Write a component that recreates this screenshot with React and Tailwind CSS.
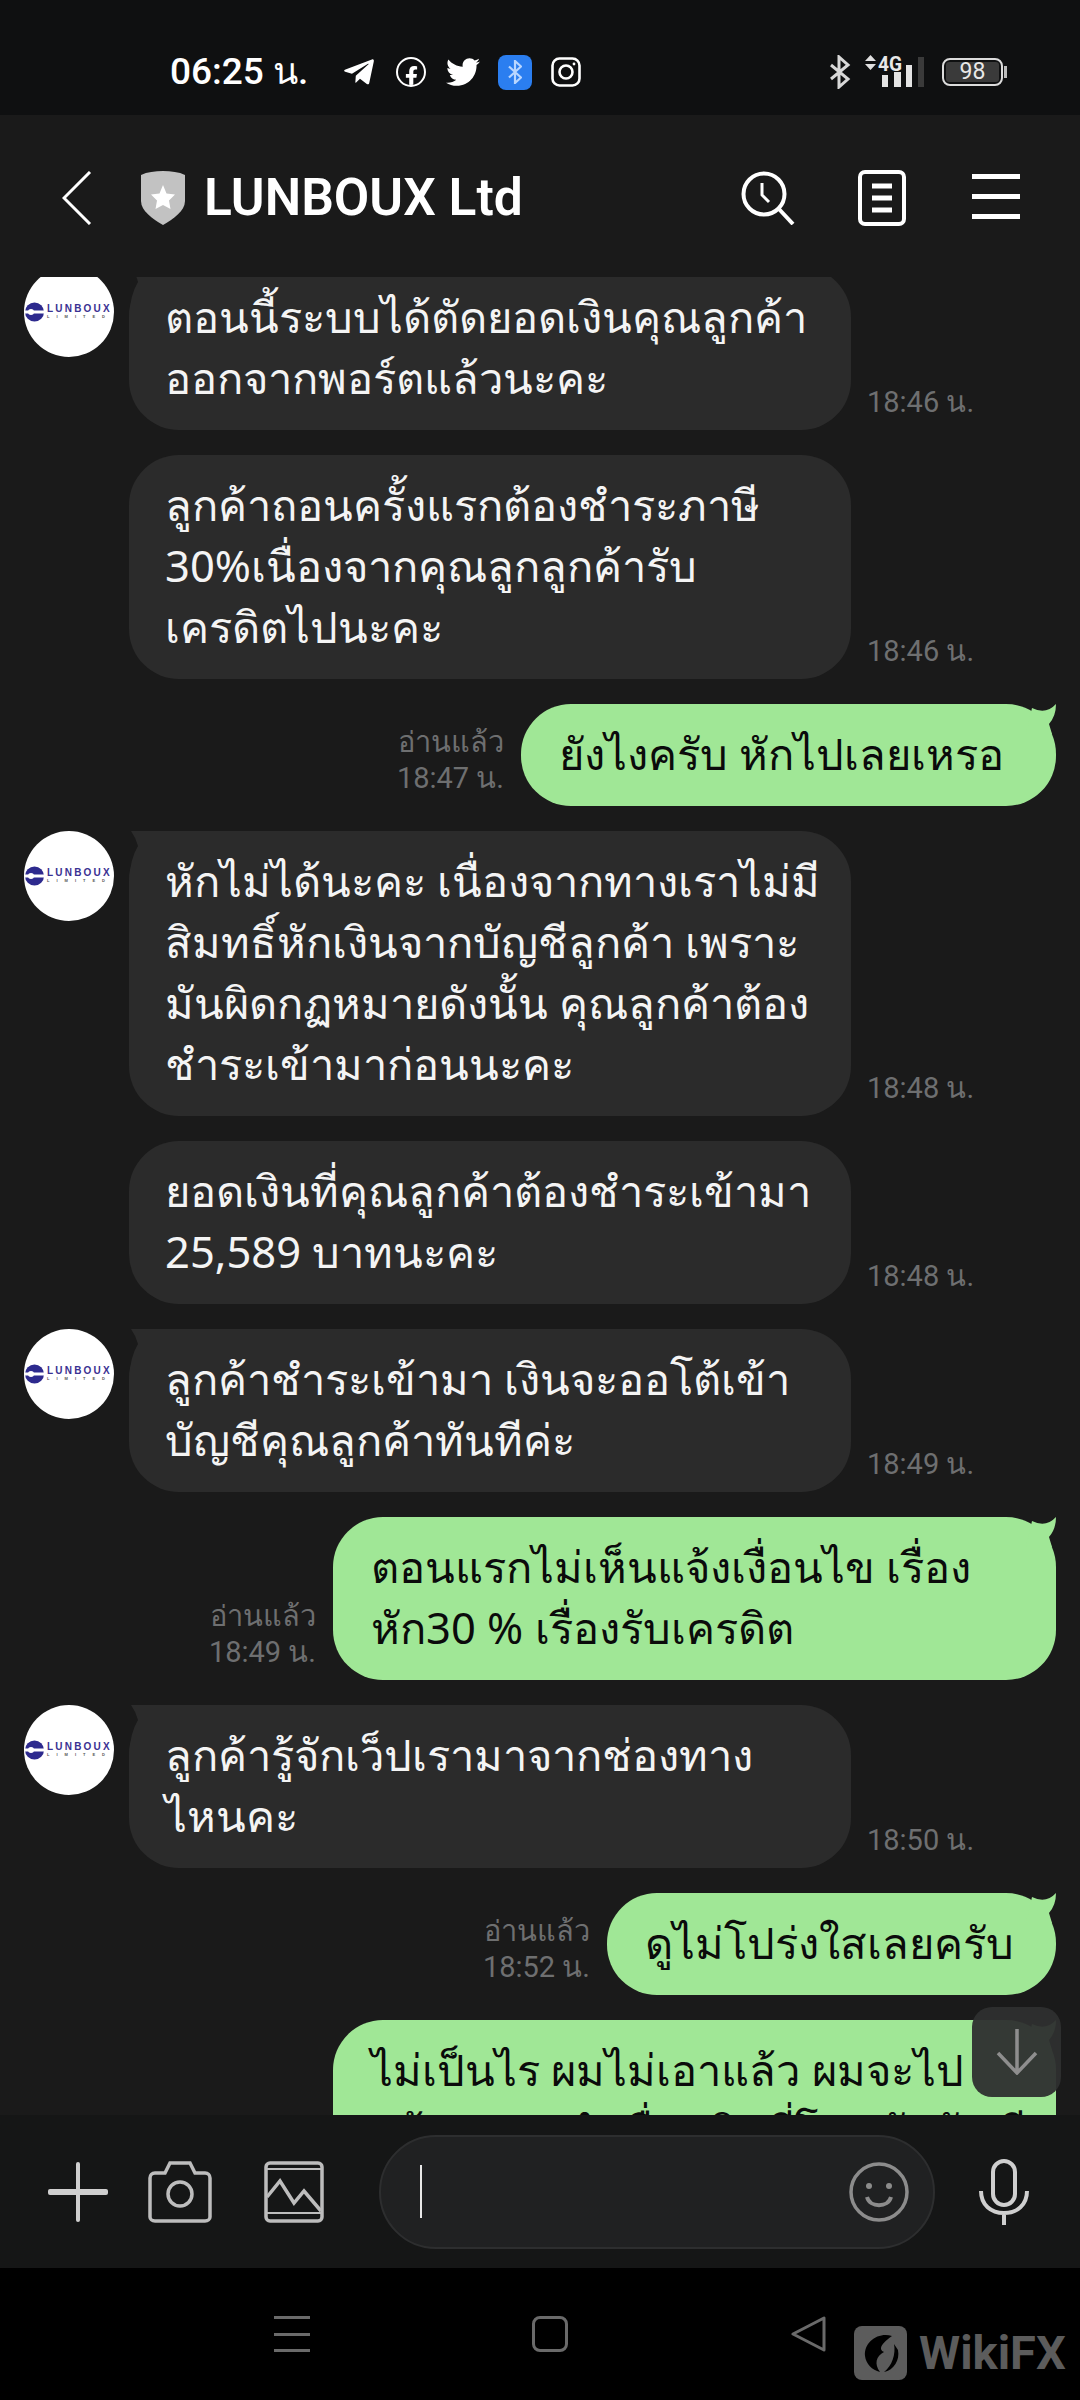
import { FaTelegramPlane, FaTwitter, FaFacebookF } from "react-icons/fa";

const messages = [
  { from: "them", avatar: true, time: "18:46 น.", lines: ["ตอนนี้ระบบได้ตัดยอดเงินคุณลูกค้า", "ออกจากพอร์ตแล้วนะคะ"] },
  { from: "them", time: "18:46 น.", lines: ["ลูกค้าถอนครั้งแรกต้องชำระภาษี", "30%เนื่องจากคุณลูกลูกค้ารับ", "เครดิตไปนะคะ"] },
  { from: "me", width: "w-[535px]", time: "18:47 น.", lines: ["ยังไงครับ หักไปเลยเหรอ"] },
  { from: "them", avatar: true, time: "18:48 น.", lines: ["หักไม่ได้นะคะ เนื่องจากทางเราไม่มี", "สิมทธิ์หักเงินจากบัญชีลูกค้า เพราะ", "มันผิดกฏหมายดังนั้น คุณลูกค้าต้อง", "ชำระเข้ามาก่อนนะคะ"] },
  { from: "them", time: "18:48 น.", lines: ["ยอดเงินที่คุณลูกค้าต้องชำระเข้ามา", "25,589 บาทนะคะ"] },
  { from: "them", avatar: true, time: "18:49 น.", lines: ["ลูกค้าชำระเข้ามา เงินจะออโต้เข้า", "บัญชีคุณลูกค้าทันทีค่ะ"] },
  { from: "me", width: "w-[723px]", time: "18:49 น.", lines: ["ตอนแรกไม่เห็นแจ้งเงื่อนไข เรื่อง", "หัก30 % เรื่องรับเครดิต"] },
  { from: "them", avatar: true, time: "18:50 น.", lines: ["ลูกค้ารู้จักเว็ปเรามาจากช่องทาง", "ไหนคะ"] },
  { from: "me", width: "w-[449px]", time: "18:52 น.", lines: ["ดูไม่โปร่งใสเลยครับ"] },
  { from: "me", width: "w-[723px]", lines: ["ไม่เป็นไร ผมไม่เอาแล้ว ผมจะไป", "แจ้งความ ทำเรื่องเงินที่โดนหักบัญชี"] },
];

function Avatar() {
  return (
    <div className="w-[90px] h-[90px] rounded-full bg-white shrink-0 overflow-hidden flex items-center">
      <svg width="19" height="20" viewBox="0 0 19 20" className="shrink-0 ml-[1px]">
        <circle cx="9.5" cy="10" r="9.5" fill="#2d2a8e" />
        <rect x="0" y="8.5" width="19" height="3" fill="#ffffff" />
        <circle cx="6" cy="10" r="3" fill="#ffffff" />
      </svg>
      <div className="ml-[3px] flex flex-col font-['Liberation_Sans'] font-bold">
        <span className="text-[#3a3192] text-[10px] leading-[10px] tracking-[2.2px]">LUNBOUX</span>
        <span className="text-[#555] text-[4px] leading-[6px] tracking-[7px]">LIMITED</span>
      </div>
    </div>
  );
}

function Stamp({ read, time, right }) {
  return (
    <div className={`flex flex-col font-['Roboto'] text-[29px] leading-[36px] text-[#6e6f70] pb-[10px] shrink-0 ${right ? "items-end mr-[17px]" : "ml-4"}`}>
      {read && <span>อ่านแล้ว</span>}
      <span>{time}</span>
    </div>
  );
}

function Message({ msg }) {
  const mine = msg.from === "me";
  if (mine) {
    return (
      <div className="flex justify-end items-end pr-6">
        {msg.time && <Stamp read time={msg.time} right />}
        <div className={`relative ${msg.width} rounded-[50px] bg-[#a0e796] text-[#0b0b0b] pl-[38px] pt-[19px] pb-[22px] shrink-0`}>
          <svg width="50" height="40" viewBox="0 0 50 40" className="absolute top-0 right-0">
            <path d="M26 4Q40 11 50 0Q50 12 43 20L46 30L20 30Z" fill="#a0e796" />
          </svg>
          {msg.lines.map((l) => (
            <p key={l} className="relative whitespace-nowrap">{l}</p>
          ))}
        </div>
      </div>
    );
  }
  return (
    <div className="flex items-end">
      <div className="self-start w-[129px] pl-6 shrink-0">{msg.avatar && <Avatar />}</div>
      <div className="relative w-[722px] rounded-[50px] bg-[#2b2b2b] text-[#f4f4f4] pl-[36px] pt-[19px] pb-[22px] shrink-0">
        {msg.avatar && (
          <svg width="50" height="50" viewBox="0 0 50 50" className="absolute top-0 left-0">
            <path d="M2 0L50 0L50 50L0 50Q1 28 9 15Q7 7 2 0Z" fill="#2b2b2b" />
          </svg>
        )}
        {msg.lines.map((l) => (
          <p key={l} className="relative whitespace-nowrap">{l}</p>
        ))}
      </div>
      <Stamp time={msg.time} />
    </div>
  );
}

function StatusBar() {
  return (
    <div className="h-[115px] bg-[#0f1011] flex items-start pt-[52px] shrink-0 text-white">
      <span className="ml-[170px] w-[172px] font-['Roboto'] text-[37px] leading-[40px] font-medium whitespace-nowrap">06:25 น.</span>
      <div className="flex items-center h-[40px] gap-[20px]">
        <FaTelegramPlane size={34} />
        <div className="w-[30px] h-[30px] rounded-full border-2 border-white flex items-end justify-center overflow-hidden">
          <FaFacebookF size={21} className="-mb-[2px]" />
        </div>
        <FaTwitter size={34} />
        <div className="w-[34px] h-[35px] rounded-[8px] bg-[#2b7ef0] flex items-center justify-center -ml-[2px]">
          <svg width="14" height="24" viewBox="0 0 14 24" fill="none" stroke="#b9d6ff" strokeWidth="2.2">
            <path d="M1 6.5L13 17.5L7 23V1L13 6.5L1 17.5" />
          </svg>
        </div>
        <svg width="30" height="30" viewBox="0 0 30 30" fill="none" stroke="#fff" strokeWidth="2.6" className="-ml-[1px]">
          <rect x="1.5" y="1.5" width="27" height="27" rx="7" />
          <circle cx="15" cy="15" r="6.5" />
          <circle cx="23" cy="7" r="1.4" fill="#fff" stroke="none" />
        </svg>
      </div>
      <div className="ml-auto mr-[73px] flex items-center h-[36px] mt-[2px] text-[#e0e0e0]">
        <svg width="22" height="34" viewBox="0 0 22 34" fill="none" stroke="#d8d8d8" strokeWidth="3">
          <path d="M2 10L19 24L10 32V2L19 10L2 24" />
        </svg>
        <svg width="78" height="34" viewBox="0 0 78 34" className="ml-[14px] overflow-visible">
          <path d="M5.500 0L11 6H0ZM0 9H11L5.500 15Z" fill="#e0e0e0" />
          <text x="13" y="16" fontFamily="Roboto" fontWeight="700" fontSize="21" fill="#e8e8e8" textLength="24" lengthAdjust="spacingAndGlyphs">4G</text>
          <rect x="17" y="20" width="6" height="12" fill="#e4e4e4" />
          <rect x="29" y="17" width="7" height="15" fill="#e4e4e4" />
          <rect x="41" y="10" width="6" height="22" fill="#e4e4e4" />
          <rect x="53" y="2" width="6" height="30" fill="#3a3a3a" />
        </svg>
        <div className="flex items-center -ml-[1px] relative">
          <div className="w-[61px] h-[28px] rounded-[8px] border-2 border-[#dcdcdc] p-[2px] flex">
            <div className="flex-1 bg-[#3a3a3a] rounded-[3px] flex items-center justify-center font-['Roboto'] text-[23px] leading-[20px] text-[#e8e8e8]">98</div>
          </div>
          <div className="w-[3px] h-[12px] bg-[#bbb] ml-[1px]" />
        </div>
      </div>
    </div>
  );
}

function Header() {
  return (
    <div className="h-[162px] bg-[#1a1a1a] flex items-center pt-[3px] shrink-0 text-white relative">
      <svg width="30" height="54" viewBox="0 0 30 54" fill="none" stroke="#fff" strokeWidth="3" className="ml-[62px]">
        <path d="M28 1L2 27L28 53" />
      </svg>
      <svg width="44" height="54" viewBox="0 0 44 54" className="ml-[49px]">
        <path d="M22 0C30 0 38 1 44 4V30C44 40 32 48 22 54C12 48 0 40 0 30V4C6 1 14 0 22 0Z" fill="#c2c2c2" />
        <path d="M22 14L25.500 22.500L34 23.500L28 29.500L29.500 38L22 34L14.500 38L16 29.500L10 23.500L18.500 22.500Z" fill="#ffffff" />
      </svg>
      <span className="ml-[19px] font-['Roboto'] text-[51.5px] leading-[60px] font-semibold whitespace-nowrap">LUNBOUX Ltd</span>
      <div className="ml-auto flex items-center mr-[60px] gap-[63px]">
        <svg width="54" height="54" viewBox="0 0 54 54" fill="none" stroke="#fff" strokeWidth="4">
          <circle cx="23" cy="23" r="20.500" />
          <path d="M37 37L52 53" />
          <path d="M21 12V24L28 31" strokeWidth="3" />
        </svg>
        <svg width="48" height="56" viewBox="0 0 48 56" fill="none" stroke="#fff" strokeWidth="4">
          <rect x="2" y="2" width="44" height="52" rx="5" />
          <path d="M14 16H34M14 28H34M14 40H34" strokeWidth="5" />
        </svg>
        <svg width="48" height="48" viewBox="0 0 48 48" fill="#fff" className="ml-[3px]">
          <rect x="0" y="0" width="48" height="5" />
          <rect x="0" y="20" width="48" height="5" />
          <rect x="0" y="40" width="48" height="5" />
        </svg>
      </div>
    </div>
  );
}

function Composer() {
  return (
    <div className="h-[153px] bg-[#151616] flex items-center shrink-0">
      <svg width="60" height="60" viewBox="0 0 60 60" fill="#cfcfcf" className="ml-[48px]">
        <rect x="0" y="27" width="60" height="6" rx="2" />
        <rect x="28" y="0" width="4" height="60" rx="2" />
      </svg>
      <svg width="64" height="62" viewBox="0 0 64 62" fill="none" stroke="#bdbdbd" strokeWidth="3.500" className="ml-[40px]">
        <path d="M7 12H17L22 2H42L47 12H57C60 12 62 14 62 17V56C62 58 60 60 57 60H7C4 60 2 58 2 56V17C2 14 4 12 7 12Z" />
        <circle cx="32" cy="33" r="12" />
      </svg>
      <svg width="60" height="62" viewBox="0 0 60 62" fill="none" stroke="#bdbdbd" strokeWidth="3.500" className="ml-[52px]">
        <rect x="2" y="2" width="56" height="58" rx="4" />
        <path d="M2 8H58M2 52H58" strokeWidth="2" />
        <path d="M3 36L16 20L30 42L40 30L57 50" />
      </svg>
      <div className="ml-[55px] w-[556px] h-[114px] rounded-[57px] bg-[#202122] border-2 border-[#2d2e2f] flex items-center pl-[39px] pr-[24px]">
        <div className="w-[1.5px] h-[53px] bg-[#e8e8e8]" />
        <svg width="60" height="60" viewBox="0 0 60 60" fill="none" stroke="#8c8c8c" strokeWidth="3.500" className="ml-auto">
          <circle cx="30" cy="30" r="28" />
          <path d="M18 35C21 46 39 46 42 35" strokeWidth="4" />
          <circle cx="20" cy="24" r="3" fill="#8c8c8c" stroke="none" />
          <circle cx="40" cy="24" r="3" fill="#8c8c8c" stroke="none" />
        </svg>
      </div>
      <svg width="50" height="66" viewBox="0 0 50 66" fill="none" stroke="#cfcfcf" strokeWidth="4" className="ml-[44px]">
        <rect x="14" y="2" width="22" height="44" rx="11" />
        <path d="M2 32C2 46 12 54 25 54C38 54 48 46 48 32M25 54V66" />
      </svg>
    </div>
  );
}

function NavBar() {
  return (
    <div className="h-[132px] bg-black flex items-start shrink-0 relative">
      <div className="ml-[274px] mt-[48px] w-[36px] h-[36px] flex flex-col justify-between">
        <div className="h-[3px] bg-[#6a6a6a]" />
        <div className="h-[3px] bg-[#6a6a6a]" />
        <div className="h-[3px] bg-[#6a6a6a]" />
      </div>
      <div className="ml-[222px] mt-[48px] w-[36px] h-[36px] rounded-[8px] border-[3px] border-[#6a6a6a]" />
      <svg width="36" height="36" viewBox="0 0 36 36" fill="none" stroke="#6a6a6a" strokeWidth="3" strokeLinejoin="round" className="ml-[223px] mt-[48px]">
        <path d="M33 2V34L2 18Z" />
      </svg>
      {/* watermark sits over the nav bar */}
      <div className="absolute left-[854px] top-[58px] flex items-center text-[#5c5c5c]">
        <svg width="53" height="54" viewBox="0 0 53 54">
          <rect width="53" height="54" rx="8" fill="#5c5c5c" />
          <path d="M38 10C24 6 10 16 11 30C12 38 18 44 26 46C20 38 22 30 30 26C26 24 24 20 38 10ZM40 18C42 28 38 40 30 46C40 44 46 34 44 24Z" fill="#000000" />
        </svg>
        <span className="ml-[12px] font-['Roboto'] font-bold text-[47px] leading-[54px]">WikiFX</span>
      </div>
    </div>
  );
}

export default function App() {
  return (
    <div className="w-[1080px] h-[2400px] flex flex-col bg-[#1a1a1a] overflow-hidden font-['Noto_Sans'] text-[43.5px] leading-[61px]">
      <StatusBar />
      <Header />
      <div className="relative flex-1 overflow-hidden">
        <div className="flex flex-col gap-[25px] -mt-[10px]">
          {messages.map((m, i) => (
            <Message key={i} msg={m} />
          ))}
        </div>
        {/* jump to latest button floats over the messages */}
        <div className="absolute left-[972px] top-[1730px] w-[89px] h-[90px] rounded-[20px] bg-[#2e2f2f]/95 flex items-center justify-center">
          <svg width="42" height="46" viewBox="0 0 42 46" fill="none" stroke="#8e8e8e" strokeWidth="3.500">
            <path d="M21 0V44M2 24L21 44L40 24" />
          </svg>
        </div>
      </div>
      <Composer />
      <NavBar />
    </div>
  );
}
